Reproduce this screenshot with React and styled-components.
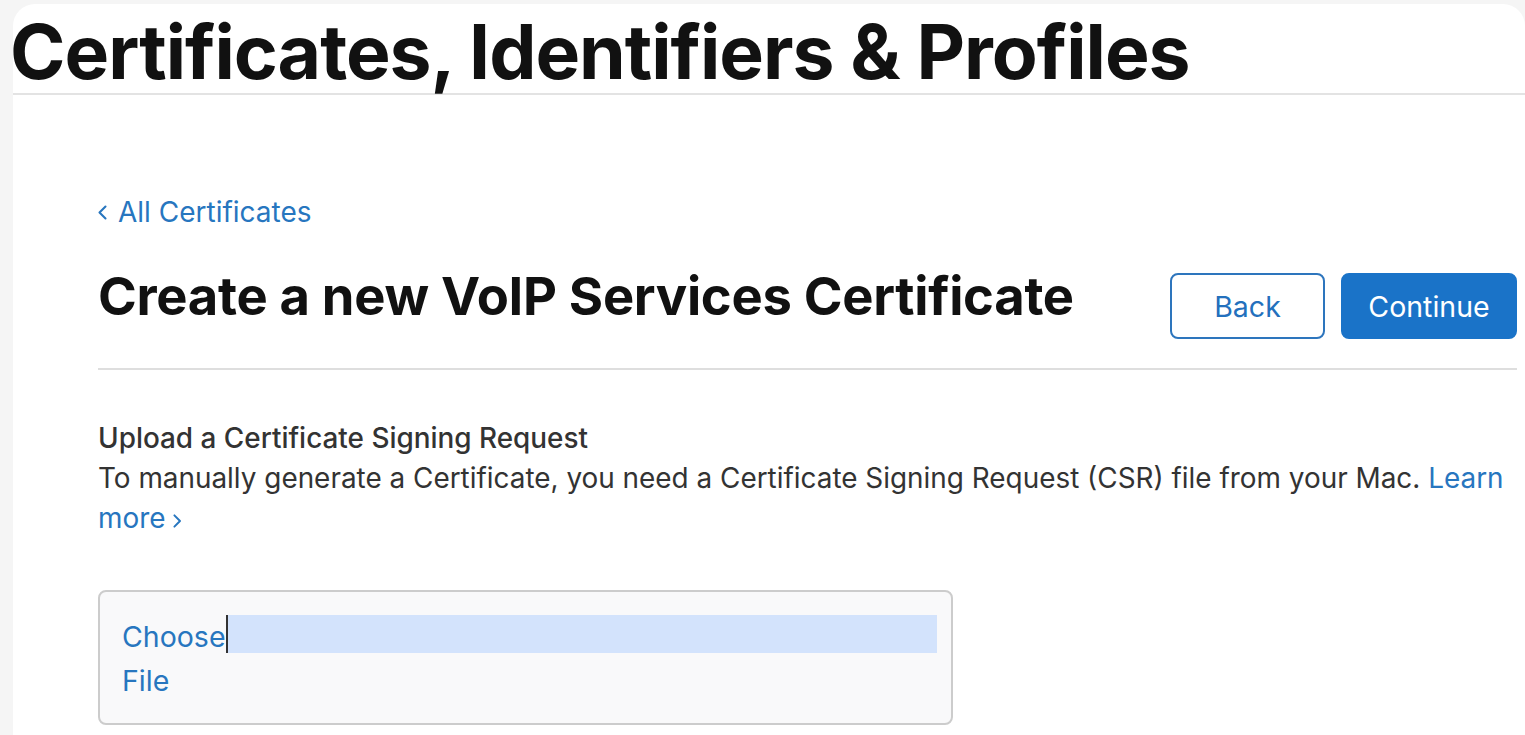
import React from "react";
import styled, { createGlobalStyle } from "styled-components";

const Global = createGlobalStyle`
  html, body { margin: 0; padding: 0; background: #f5f5f5; }
  body { font-family: Inter, "Noto Sans", sans-serif; color: #1d1d1f; }
`;

const Card = styled.div`
  margin: 4px 0 0 13px;
  min-height: 731px;
  background: #ffffff;
  border-radius: 22px 22px 0 0;
`;

const Header = styled.header`
  border-bottom: 2px solid #e3e3e3;
  height: 89px;
  display: flex;
  align-items: flex-end;
`;

const SiteTitle = styled.h1`
  margin: 0 0 4px -3px;
  font-size: 75px;
  font-weight: 700;
  letter-spacing: -1px;
  line-height: 1;
  color: #111111;
  white-space: nowrap;
`;

const Main = styled.main`
  padding: 99px 8px 0 85px;
`;

const BackLink = styled.a`
  display: inline-flex;
  align-items: center;
  gap: 11px;
  color: #2776bf;
  font-size: 28px;
  text-decoration: none;
  line-height: 36px;
`;

const TitleRow = styled.div`
  display: flex;
  justify-content: space-between;
  align-items: center;
  margin-top: 43px;
  padding-bottom: 29px;
  border-bottom: 2px solid #dedede;
`;

const PageTitle = styled.h2`
  margin: -20px 0 0;
  font-size: 52.5px;
  font-weight: 700;
  color: #111111;
  letter-spacing: -0.3px;
`;

const Buttons = styled.div`
  display: flex;
  gap: 16px;
`;

const Button = styled.button`
  height: 66px;
  padding: 0;
  width: ${(p) => (p.$primary ? "176px" : "155px")};
  border-radius: 8px;
  font-family: inherit;
  font-size: 28.5px;
  border: 2px solid;
  background: ${(p) => (p.$primary ? "#1a73c8" : "#ffffff")};
  color: ${(p) => (p.$primary ? "#ffffff" : "#2370bd")};
  border-color: ${(p) => (p.$primary ? "#1a73c8" : "#2d75bd")};
`;

const Section = styled.section`
  margin-top: 48px;
  font-size: 27.9px;
  line-height: 40px;
  color: #333333;
`;

const SectionTitle = styled.h3`
  margin: 0;
  font-size: 27.9px;
  font-weight: 500;
  line-height: 40px;
  color: #333333;
`;

const Body = styled.p`
  margin: 0;
`;

const Link = styled.a`
  color: #2776bf;
  text-decoration: none;
`;

const FileBox = styled.div`
  margin-top: 52px;
  width: 855px;
  height: 135px;
  box-sizing: border-box;
  border: 2px solid #cccccc;
  border-radius: 8px;
  background: #f9f9fa;
  padding: 22px 14px 0 22px;
  display: flex;
  align-items: flex-start;
`;

const ChooseLabel = styled.span`
  color: #2776bf;
  font-size: 28.5px;
  line-height: 44px;
  width: min-content;
  margin-top: 1px;
`;

const Selection = styled.span`
  display: block;
  flex: 1;
  height: 38px;
  margin-top: 1px;
  background: #d3e3fc;
  border-left: 2px solid #333333;
`;

const Chevron = ({ dir = "left", size = 14 }) => (
  <svg width={size * 0.6} height={size} viewBox="0 0 6 10" fill="none">
    <path
      d={dir === "left" ? "M5 1 1 5l4 4" : "M1 1l4 4-4 4"}
      stroke="currentColor"
      strokeWidth="1.4"
      strokeLinecap="round"
      strokeLinejoin="round"
    />
  </svg>
);

export default function App() {
  return (
    <>
      <Global />
      <Card>
        <Header>
          <SiteTitle>Certificates, Identifiers &amp; Profiles</SiteTitle>
        </Header>
        <Main>
          <BackLink href="#">
            <Chevron dir="left" size={15} />
            All Certificates
          </BackLink>
          <TitleRow>
            <PageTitle>Create a new VoIP Services Certificate</PageTitle>
            <Buttons>
              <Button>Back</Button>
              <Button $primary>Continue</Button>
            </Buttons>
          </TitleRow>
          <Section>
            <SectionTitle>Upload a Certificate Signing Request</SectionTitle>
            <Body>
              To manually generate a Certificate, you need a Certificate Signing Request (CSR) file from your Mac.{" "}
              <Link href="#">Learn</Link>{" "}
              <Link href="#">
                more <Chevron dir="right" size={14} />
              </Link>
            </Body>
          </Section>
          <FileBox>
            <ChooseLabel>Choose File</ChooseLabel>
            <Selection />
          </FileBox>
        </Main>
      </Card>
    </>
  );
}
